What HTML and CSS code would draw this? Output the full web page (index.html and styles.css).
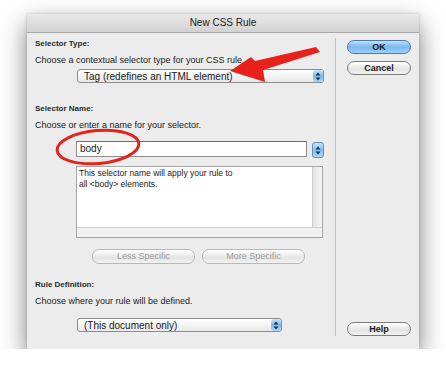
FILE: index.html
```html
<!DOCTYPE html>
<html lang="en">
<head>
    <meta charset="UTF-8">
    <meta name="viewport" content="width=device-width, initial-scale=1.0">
    <title>New CSS Rule</title>
    <link rel="stylesheet" href="styles.css">
</head>
<body>

    <div class="dialog">
        <div class="title-bar">New CSS Rule</div>

        <div class="dialog-body">
            <!-- Main options -->
            <div class="main">
                <div class="label">Selector Type:</div>
                <div class="hint">Choose a contextual selector type for your CSS rule.</div>
                <div class="select select-type">
                    <span>Tag (redefines an HTML element)</span>
                    <span class="stepper"><svg width="6" height="9" viewBox="0 0 6 9"><path d="M3 0.5L5.5 3.5H0.5Z M3 8.5L5.5 5.5H0.5Z" fill="#1d2f4a"/></svg></span>
                </div>

                <div class="label label-name">Selector Name:</div>
                <div class="hint">Choose or enter a name for your selector.</div>
                <div class="name-row">
                    <div class="name-input">body</div>
                    <span class="stepper stepper-alone"><svg width="6" height="9" viewBox="0 0 6 9"><path d="M3 0.5L5.5 3.5H0.5Z M3 8.5L5.5 5.5H0.5Z" fill="#1d2f4a"/></svg></span>
                </div>

                <div class="description">
                    <div class="description-row">
                        <div class="description-text">This selector name will apply your rule to<br>all &lt;body&gt; elements.</div>
                        <div class="vscroll"></div>
                    </div>
                    <div class="hscroll"></div>
                </div>

                <div class="specific-buttons">
                    <div class="pill disabled">Less Specific</div>
                    <div class="pill disabled">More Specific</div>
                </div>

                <div class="label label-rule">Rule Definition:</div>
                <div class="hint">Choose where your rule will be defined.</div>
                <div class="select select-doc">
                    <span>(This document only)</span>
                    <span class="stepper"><svg width="6" height="9" viewBox="0 0 6 9"><path d="M3 0.5L5.5 3.5H0.5Z M3 8.5L5.5 5.5H0.5Z" fill="#1d2f4a"/></svg></span>
                </div>
            </div>

            <!-- Side buttons -->
            <div class="side">
                <div class="pill default">OK</div>
                <div class="pill">Cancel</div>
                <div class="side-spacer"></div>
                <div class="pill">Help</div>
            </div>
        </div>
    </div>

    <!-- Red annotations drawn over the screenshot -->
    <svg class="annotations" width="446" height="377" viewBox="0 0 446 377">
        <polygon points="230,71 251,57 255,61 316,47 320,52 263,70 265,82" fill="#e8221b"/>
        <ellipse cx="98" cy="147" rx="41" ry="16.5" transform="rotate(-5 98 147)" fill="none" stroke="#e3231c" stroke-width="3"/>
    </svg>

</body>
</html>
```

FILE: styles.css
```css
body {
    margin: 0;
    background-color: #fff;
    font-family: "Liberation Sans", Arial, sans-serif;
    color: #1a1a1a;
}

.dialog {
    width: 392px;
    height: 335px;
    margin: 14px 0 0 27px;
    display: flex;
    flex-direction: column;
    background-color: #ececec;
    box-shadow: 0 10px 24px rgba(0, 0, 0, 0.5), 0 0 3px rgba(0, 0, 0, 0.2);
}

.title-bar {
    height: 18px;
    line-height: 18px;
    text-align: center;
    font-size: 10px;
    color: #222;
    background: linear-gradient(#e9e9e9, #d2d2d2);
    border-bottom: 1px solid #a8a8a8;
}

.dialog-body {
    flex: 1;
    display: flex;
}

.main {
    width: 300px;
    padding: 5px 0 0 8px;
}

.label {
    font-size: 8px;
    font-weight: bold;
    line-height: 12px;
    color: #2a2a2a;
}

.label-name {
    margin-top: 20px;
}

.label-rule {
    margin-top: 15px;
}

.hint {
    font-size: 9px;
    line-height: 12px;
    margin-top: 4px;
}

.select {
    display: flex;
    align-items: center;
    justify-content: space-between;
    height: 12px;
    margin: 3px 0 0 42px;
    padding-left: 6px;
    font-size: 10px;
    border: 1px solid #8c8c8c;
    border-radius: 3px;
    background: linear-gradient(#ffffff, #e9e9e9);
}

.select-type {
    width: 239px;
}

.select-doc {
    width: 197px;
    margin-top: 11px;
}

.stepper {
    width: 10px;
    height: 12px;
    display: flex;
    align-items: center;
    justify-content: center;
    border-radius: 3px;
    background: linear-gradient(#c5e3fb, #7dbdf0 50%, #a8d6fa);
}

.stepper-alone {
    height: 14px;
    margin-top: 1px;
    border: 1px solid #6a8fb8;
}

.name-row {
    display: flex;
    gap: 5px;
    margin: 10px 0 0 41px;
}

.name-input {
    width: 226px;
    height: 14px;
    line-height: 14px;
    padding-left: 3px;
    font-size: 10px;
    background-color: #fff;
    border: 1px solid #8e8e8e;
    border-top-color: #6e6e6e;
}

.description {
    width: 245px;
    height: 70px;
    margin: 8px 0 0 41px;
    display: flex;
    flex-direction: column;
    border: 1px solid #a5a5a5;
    background-color: #fff;
}

.description-row {
    flex: 1;
    display: flex;
}

.description-text {
    flex: 1;
    padding: 1px 0 0 2px;
    font-size: 8.5px;
    line-height: 11px;
}

.vscroll {
    width: 9px;
    background: linear-gradient(90deg, #e2e2e2, #f7f7f7);
    border-left: 1px solid #cfcfcf;
}

.hscroll {
    height: 9px;
    background-color: #f1f1f1;
    border-top: 1px solid #cfcfcf;
}

.specific-buttons {
    display: flex;
    gap: 7px;
    margin: 11px 0 0 57px;
}

.pill {
    height: 12px;
    line-height: 12px;
    text-align: center;
    font-size: 9px;
    font-weight: bold;
    border: 1px solid #7c7c7c;
    border-radius: 7px;
    background: linear-gradient(#ffffff, #e4e4e4 60%, #f2f2f2);
}

.specific-buttons .pill {
    width: 101px;
    height: 13px;
    line-height: 13px;
}

.pill.disabled {
    font-weight: normal;
    color: #9c9c9c;
    border-color: #b9b9b9;
}

.pill.default {
    border-color: #4f79aa;
    background: linear-gradient(#bfe0fa, #79b9ee 50%, #9ed1f8);
}

.side {
    width: 64px;
    margin: 5px 0 13px 0;
    padding: 2px 8px 0 11px;
    display: flex;
    flex-direction: column;
    gap: 7px;
    border-left: 1px solid #c2c2c2;
}

.side-spacer {
    flex: 1;
}

.annotations {
    position: absolute;
    left: 0;
    top: 0;
    pointer-events: none;
}
```
